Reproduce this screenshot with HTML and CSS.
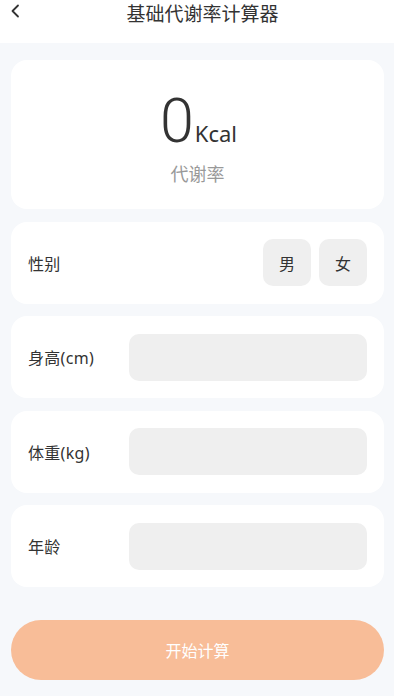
FILE: index.html
```html
<!DOCTYPE html>
<html lang="zh">
<head>
<meta charset="utf-8">
<meta name="viewport" content="width=device-width, initial-scale=1">
<title>基础代谢率计算器</title>
<link rel="stylesheet" href="styles.css">
</head>
<body>
<header class="topbar">
  <span class="back">
    <svg width="10" height="14" viewBox="0 0 10 14"><path d="M8 1.5 L2.5 7 L8 12.5" fill="none" stroke="#333" stroke-width="1.8" stroke-linecap="round" stroke-linejoin="round"/></svg>
  </span>
  <h1 class="title">基础代谢率计算器</h1>
</header>
<main class="content">
  <section class="card result">
    <div class="value"><span class="num">0</span><span class="unit">Kcal</span></div>
    <div class="caption">代谢率</div>
  </section>
  <section class="card row">
    <span class="label">性别</span>
    <div class="genders">
      <span class="gbtn">男</span>
      <span class="gbtn">女</span>
    </div>
  </section>
  <section class="card row">
    <span class="label">身高(cm)</span>
    <span class="field"></span>
  </section>
  <section class="card row">
    <span class="label">体重(kg)</span>
    <span class="field"></span>
  </section>
  <section class="card row">
    <span class="label">年龄</span>
    <span class="field"></span>
  </section>
  <button class="start">开始计算</button>
</main>
</body>
</html>
```
FILE: styles.css
```css
html, body {
  margin: 0;
  padding: 0;
}
body {
  background: #f6f8fb;
  font-family: "Noto Sans", "Noto Sans CJK SC", sans-serif;
  color: #333;
  width: 394px;
  height: 696px;
  overflow: hidden;
}
.topbar {
  height: 43px;
  background: #fff;
  position: relative;
  display: flex;
  justify-content: center;
}
.back {
  position: absolute;
  left: 10px;
  top: 4px;
  display: flex;
}
.title {
  margin: 0;
  font-size: 19px;
  font-weight: 400;
  line-height: 26px;
  color: #333;
  padding-left: 11px;
  font-family: "Noto Sans CJK SC", sans-serif;
}
.content {
  padding: 17px 10px 0 11px;
  display: flex;
  flex-direction: column;
}
.card {
  background: #fff;
  border-radius: 16px;
  margin-bottom: 12.5px;
}
.result {
  height: 149px;
  display: flex;
  flex-direction: column;
  align-items: center;
  box-sizing: border-box;
  padding-top: 30px;
}
.value {
  display: flex;
  align-items: baseline;
  line-height: 1;
  color: #333;
  padding-left: 2px;
}
.num {
  font-family: Roboto, sans-serif;
  font-weight: 300;
  font-size: 61px;
  line-height: 62px;
}
.unit {
  font-family: "Noto Sans", sans-serif;
  font-size: 22px;
  margin-left: 1px;
}
.caption {
  margin-top: 10px;
  font-size: 18px;
  color: #999;
  font-family: "Noto Sans CJK SC", sans-serif;
  line-height: 22px;
}
.row {
  height: 82px;
  box-sizing: border-box;
  padding: 0 17px;
  display: flex;
  align-items: center;
}
.label {
  font-size: 16px;
  width: 101px;
  flex: none;
  font-family: "Noto Sans", "Noto Sans CJK SC", sans-serif;
  color: #333;
  letter-spacing: 0.3px;
}
.genders {
  margin-left: auto;
  display: flex;
  gap: 8px;
}
.gbtn {
  width: 48px;
  height: 47px;
  border-radius: 10px;
  background: #efefef;
  display: flex;
  align-items: center;
  justify-content: center;
  font-size: 16px;
  font-family: "Noto Sans CJK SC", sans-serif;
  color: #333;
}
.field {
  flex: 1;
  height: 47px;
  border-radius: 10px;
  background: #efefef;
}
.start {
  margin-top: 20px;
  height: 60px;
  width: 373px;
  border: none;
  border-radius: 30px;
  background: #f8bd98;
  color: #fff;
  font-size: 16px;
  font-family: "Noto Sans CJK SC", sans-serif;
  padding: 0;
}
```
